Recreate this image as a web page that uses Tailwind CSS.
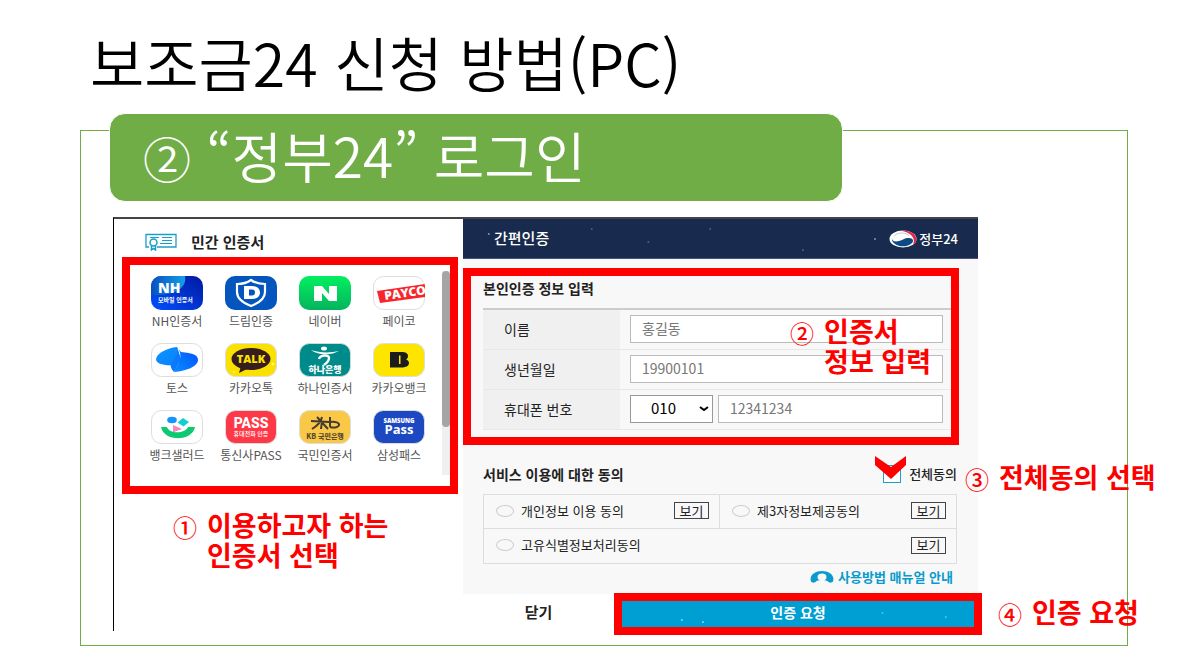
<!DOCTYPE html>
<html lang="ko">
<head>
    <meta charset="UTF-8">
    <meta name="viewport" content="width=device-width, initial-scale=1.0">
    <title>보조금24 신청 방법(PC)</title>
    <!-- Tailwind CSS CDN -->
    <script src="https://cdn.jsdelivr.net/npm/@tailwindcss/browser@4"></script>
</head>
<body class="bg-white font-['Noto_Sans_CJK_KR',sans-serif] text-[#222]">
    <main class="pt-5 pl-20 pr-[71px] pb-5">
        <h1 class="pl-2.5 text-[59px] leading-[84px] font-[350] text-black whitespace-nowrap">보조금24 신청 방법(PC)</h1>

        <section class="mt-[26px] border border-[#70ad47]">
            <h2 class="relative -mt-[18px] ml-7 w-[734px] max-w-full border border-white rounded-2xl bg-[#70ad47] pl-[33px] text-[55px] leading-[80px] pb-[7px] font-[350] text-white whitespace-nowrap"><span class="text-5xl leading-none">②</span> “정부24” 로그인</h2>

            <div class="flex mt-[15px] ml-8 mr-[149px] mb-3.5 border-t-2 border-l border-t-[#444] border-l-black">
                <!-- Certificate list -->
                <section class="w-[349px] shrink-0 pl-2 pr-[5px]">
                    <h3 class="flex items-center gap-3.5 h-[38px] pt-2 pl-[23px] text-[15px] font-bold">
                        <svg class="w-8 h-[18px]" viewBox="0 0 32 18" fill="none" stroke="#1a9fc9">
                            <path d="M4 14H1V1.500h30V14H12" stroke-width="1.300"/>
                            <path d="M5 4.500h9M17 4.500h10M17 7.500h10M15 10.500h12" stroke-width="1"/>
                            <circle cx="8.500" cy="9.500" r="3.500" stroke-width="1.500"/>
                            <path d="M6.500 12.500V17l2-1.500 2 1.500v-4.500" stroke-width="1.500"/>
                        </svg>
                        민간 인증서
                    </h3>
                    <div class="relative flex border-8 border-[#f00] h-[237px]">
                        <ul class="grid grid-cols-[repeat(4,74px)] auto-rows-[67px] pl-2.5 pt-2.5 flex-1 text-xs leading-4 text-center text-[#555] whitespace-nowrap">
                            <li class="flex flex-col items-center gap-0.5">
                                <svg class="w-[54px] h-9 shrink-0" viewBox="0 0 54 36">
                                    <defs>
                                        <linearGradient id="nh" x1="0" y1="1" x2="1" y2="0"><stop offset="0" stop-color="#0050ff"/><stop offset="1" stop-color="#0018a0"/></linearGradient>
                                        <linearGradient id="nh-arc" x1="0" y1="0" x2="1" y2="0"><stop offset="0" stop-color="#0a4fc0"/><stop offset="1" stop-color="#12a0e8"/></linearGradient>
                                    </defs>
                                    <rect x="1" y="1" width="52" height="34" rx="10" fill="url(#nh)"/>
                                    <path d="M1 20V11A10 10 0 0 1 11 1h24c2 11-8 20-34 19z" fill="url(#nh-arc)"/>
                                    <text x="8" y="18" font-size="14" font-weight="800" font-family="Open Sans, sans-serif" fill="#fff">NH</text>
                                    <text x="8" y="27" font-size="6" font-weight="700" fill="#fff">모바일 인증서</text>
                                </svg>
                                NH인증서
                            </li>
                            <li class="flex flex-col items-center gap-0.5">
                                <svg class="w-[54px] h-9 shrink-0" viewBox="0 0 54 36">
                                    <rect x="1" y="1" width="52" height="34" rx="10" fill="#0455bd"/>
                                    <path d="M27 5c4 3 9 4 14 4v8c0 7-6 11-14 14-8-3-14-7-14-14V9c5 0 10-1 14-4z" fill="none" stroke="#fff" stroke-width="2.200"/>
                                    <path fill-rule="evenodd" d="M20 11h8c5 0 8 2.500 8 6.500S33 24 28 24h-8zM25 14.500v6h3c2 0 3-1 3-3s-1-3-3-3z" fill="#fff"/>
                                </svg>
                                드림인증
                            </li>
                            <li class="flex flex-col items-center gap-0.5">
                                <svg class="w-[54px] h-9 shrink-0" viewBox="0 0 54 36">
                                    <defs><linearGradient id="naver" x1="0" y1="0" x2="0" y2="1"><stop offset="0" stop-color="#03ef60"/><stop offset="1" stop-color="#05b45d"/></linearGradient></defs>
                                    <rect x="1" y="1" width="52" height="34" rx="10" fill="url(#naver)"/>
                                    <path d="M16 11h8l7 8v-8h8v15h-8l-7-8v8h-8z" fill="#fff"/>
                                </svg>
                                네이버
                            </li>
                            <li class="flex flex-col items-center gap-0.5">
                                <svg class="w-[54px] h-9 shrink-0" viewBox="0 0 54 36">
                                    <defs><clipPath id="payco"><rect x="1" y="1" width="52" height="34" rx="10"/></clipPath></defs>
                                    <rect x="1.500" y="1.500" width="51" height="33" rx="10" fill="#fff" stroke="#ddd"/>
                                    <g clip-path="url(#payco)">
                                        <path d="M5 16l48-7v13L8 28z" fill="#f8252b"/>
                                        <text transform="rotate(-8 13 25)" x="13" y="25" font-size="12" font-weight="800" font-family="Open Sans, sans-serif" fill="#fff">PAYCO</text>
                                    </g>
                                </svg>
                                페이코
                            </li>
                            <li class="flex flex-col items-center gap-0.5">
                                <svg class="w-[54px] h-9 shrink-0" viewBox="0 0 54 36">
                                    <defs>
                                        <linearGradient id="toss" x1="0" y1="0" x2="1" y2="1"><stop offset="0" stop-color="#0a98ff"/><stop offset="1" stop-color="#0a7dff"/></linearGradient>
                                        <linearGradient id="toss-right" x1="0" y1="1" x2="1" y2="0"><stop offset="0" stop-color="#0a8cff"/><stop offset="1" stop-color="#0050ff"/></linearGradient>
                                    </defs>
                                    <rect x="1.500" y="1.500" width="51" height="33" rx="10" fill="#fff" stroke="#ddd"/>
                                    <path d="M27 5C17 6 7 11 6 17c0 5 8 7 19 6l6-4z" fill="url(#toss)"/>
                                    <path d="M27 5c3 3 4 8 3 12-1 5-4 8-6 13 13-1 24-6 24-12 0-5-5-7-17-8z" fill="url(#toss-right)"/>
                                    <path d="M27 5l4 12-7 13c-3-3-4-6-3-9 5-4 7-9 6-16z" fill="#0a78ff"/>
                                </svg>
                                토스
                            </li>
                            <li class="flex flex-col items-center gap-0.5">
                                <svg class="w-[54px] h-9 shrink-0" viewBox="0 0 54 36">
                                    <rect x="1.500" y="1.500" width="51" height="33" rx="10" fill="#fae100" stroke="#ddd"/>
                                    <ellipse cx="27" cy="17" rx="19.500" ry="11" fill="#371d1e"/>
                                    <path d="M17 24l-2 7 10-5z" fill="#371d1e"/>
                                    <text x="27" y="21" text-anchor="middle" font-size="11" font-weight="800" font-family="Open Sans, sans-serif" fill="#fae100">TALK</text>
                                    <circle cx="49" cy="22" r="1.500" fill="#fff38a"/>
                                    <circle cx="10" cy="30" r="1" fill="#fff38a"/>
                                </svg>
                                카카오톡
                            </li>
                            <li class="flex flex-col items-center gap-0.5">
                                <svg class="w-[54px] h-9 shrink-0" viewBox="0 0 54 36">
                                    <rect x="1.500" y="1.500" width="51" height="33" rx="10" fill="#008b8b" stroke="#cfdada"/>
                                    <ellipse cx="26" cy="6.500" rx="3" ry="2" fill="#fff"/>
                                    <path d="M13 8c8 3 20 3 28 1-7 4-20 5-28-1z" fill="#fff"/>
                                    <path d="M21 17c1-4 10-5 10-1 0 3-2 5-5 7" fill="none" stroke="#fff" stroke-width="2.400"/>
                                    <text x="27" y="31" text-anchor="middle" font-size="9" font-weight="900" fill="#fff">하나은행</text>
                                </svg>
                                하나인증서
                            </li>
                            <li class="flex flex-col items-center gap-0.5">
                                <svg class="w-[54px] h-9 shrink-0" viewBox="0 0 54 36">
                                    <rect x="1.500" y="1.500" width="51" height="33" rx="10" fill="#fee500" stroke="#ddd"/>
                                    <path fill-rule="evenodd" d="M18 10h11c5 0 7 1.500 7 4 0 2-1 3-2 3.500 2 .5 3 2 3 3.500 0 3-3 4.500-8 4.500H18zM27 13.500v8.500h1.500v-8.500z" fill="#1c1c1c"/>
                                </svg>
                                카카오뱅크
                            </li>
                            <li class="flex flex-col items-center gap-0.5">
                                <svg class="w-[54px] h-9 shrink-0" viewBox="0 0 54 36">
                                    <rect x="1.500" y="1.500" width="51" height="33" rx="10" fill="#fff" stroke="#ddd"/>
                                    <ellipse cx="22" cy="11" rx="4.800" ry="3.200" fill="#1593ff"/>
                                    <path d="M33 9l6 4-5.500 4.500-6-4z" fill="#14cfd2"/>
                                    <path d="M23 16l9 4-9 3.500z" fill="#f58ac0"/>
                                    <path d="M11 18h6c2 7 18 7 21 0h7c-3 15-31 15-34 0z" fill="#0dc971"/>
                                </svg>
                                뱅크샐러드
                            </li>
                            <li class="flex flex-col items-center gap-0.5">
                                <svg class="w-[54px] h-9 shrink-0" viewBox="0 0 54 36">
                                    <rect x="1.500" y="1.500" width="51" height="33" rx="10" fill="#ff3848" stroke="#ddd"/>
                                    <text x="27" y="19" text-anchor="middle" font-size="14" font-weight="800" font-family="Roboto, sans-serif" fill="#fff">PASS</text>
                                    <text x="27" y="27" text-anchor="middle" font-size="6" font-weight="500" fill="#fff">휴대전화 인증</text>
                                </svg>
                                통신사PASS
                            </li>
                            <li class="flex flex-col items-center gap-0.5">
                                <svg class="w-[54px] h-9 shrink-0" viewBox="0 0 54 36">
                                    <rect x="1.500" y="1.500" width="51" height="33" rx="10" fill="#f9c846" stroke="#ddd"/>
                                    <path d="M13 12l18 1M24 8c-1 5-5 9-10 12M19 8l11 12M32 8v10M32 13c5-1 10 1 9 3-1 3-6 3-9 2M24 12l-1 8" fill="none" stroke="#453a30" stroke-width="2"/>
                                    <text x="27" y="30" text-anchor="middle" font-size="7" font-weight="800" fill="#5a4a30">KB 국민은행</text>
                                </svg>
                                국민인증서
                            </li>
                            <li class="flex flex-col items-center gap-0.5">
                                <svg class="w-[54px] h-9 shrink-0" viewBox="0 0 54 36">
                                    <rect x="1.500" y="1.500" width="51" height="33" rx="10" fill="#1c49c2" stroke="#ddd"/>
                                    <text x="27" y="14" text-anchor="middle" font-size="6" font-weight="800" font-family="Open Sans, sans-serif" fill="#fff">SAMSUNG</text>
                                    <text x="27" y="25" text-anchor="middle" font-size="13" font-weight="700" font-family="Open Sans, sans-serif" fill="#fff">Pass</text>
                                </svg>
                                삼성패스
                            </li>
                        </ul>
                        <div class="absolute top-1.5 right-0 w-2 h-[204px] bg-[#f0f0f0]">
                            <div class="h-[156px] rounded-full bg-[#a5a5a5]"></div>
                        </div>
                    </div>
                    <p class="flex gap-2.5 pl-[51px] pt-4 text-[27px] leading-[30px] font-bold text-[#f00] whitespace-nowrap">
                        <span class="text-2xl leading-[34px] font-medium">①</span>
                        <span>이용하고자 하는<br>인증서 선택</span>
                    </p>
                </section>

                <!-- Simple authentication form -->
                <form class="flex-1 min-w-0 bg-[#f8f8f8]">
                    <header class="relative flex items-center justify-between h-10 pl-[31px] pr-5 bg-[#182a4d] border-b border-[#48557a] text-white">
                        <h3 class="text-[15px] font-medium">간편인증</h3>
                        <span class="flex items-center gap-0.5 text-[13px] font-medium">
                            <svg class="w-7 h-[18px]" viewBox="0 0 28 18">
                                <ellipse cx="14" cy="9" rx="13.500" ry="8.500" fill="#fff"/>
                                <path d="M12 .7C20-.3 27 4 27.500 9c0 3-2 5-4 6.500 3-5 2-12-11.500-14.800z" fill="#e0284c"/>
                                <path d="M3 8.500c0 3 4 3.500 7 2.500 4-1 6-3.500 10-3 4 0 5 3 3 5-4 4-12 4.500-17 1C4 12.500 2.500 10.500 3 8.500z" fill="#0d4a84"/>
                                <path d="M5 6.500c3-4.500 11-4.500 15-1" fill="none" stroke="#182a4d" stroke-opacity=".25"/>
                            </svg>
                            정부24
                        </span>
                        <svg class="absolute inset-0 w-full h-full" fill="#8794b5">
                            <circle cx="5%" cy="15" r="1"/>
                            <circle cx="25%" cy="10" r="1" fill-opacity=".5"/>
                            <circle cx="36%" cy="23" r="1" fill-opacity=".5"/>
                            <circle cx="48%" cy="10" r="1" fill-opacity=".5"/>
                            <circle cx="66%" cy="31" r="1" fill-opacity=".5"/>
                            <circle cx="80%" cy="20" r="1"/>
                        </svg>
                    </header>

                    <section class="relative mt-[9px] mr-[19px] h-[177px] border-8 border-[#f00] pl-3">
                        <h4 class="h-8 text-sm font-bold leading-6">본인인증 정보 입력</h4>
                        <table class="w-full border-t-2 border-[#ccc] text-sm">
                            <tr class="h-10 border-b border-[#e8e8e8]">
                                <th scope="row" class="w-[137px] pl-[21px] bg-[#f0f0f0] text-left font-normal"><label for="name">이름</label></th>
                                <td class="pl-2.5 pr-2"><input type="text" id="name" name="name" placeholder="홍길동" class="block w-full h-7 pb-0.5 pl-[11px] bg-white border border-[#bbb] placeholder:text-[#777]"></td>
                            </tr>
                            <tr class="h-10 border-b border-[#e8e8e8]">
                                <th scope="row" class="pl-[21px] bg-[#f0f0f0] text-left font-normal"><label for="birth">생년월일</label></th>
                                <td class="pl-2.5 pr-2"><input type="text" id="birth" name="birth" placeholder="19900101" class="block w-full h-7 pb-0.5 pl-[11px] bg-white border border-[#bbb] placeholder:text-[#777]"></td>
                            </tr>
                            <tr class="h-10 border-b border-[#e8e8e8]">
                                <th scope="row" class="pl-[21px] bg-[#f0f0f0] text-left font-normal"><label for="phone">휴대폰 번호</label></th>
                                <td class="pl-2.5 pr-2">
                                    <div class="flex gap-[5px]">
                                        <div class="relative w-[83px] shrink-0">
                                            <select name="carrier" aria-label="휴대폰 앞자리" class="appearance-none block w-full h-7 pb-0.5 pl-5 bg-white border border-[#999] text-[15px] text-black"><option>010</option></select>
                                            <svg class="absolute right-1 top-2.5 w-2.5 h-2 pointer-events-none" viewBox="0 0 10 8" fill="none" stroke="#000" stroke-width="2"><path d="M1 2l4 3 4-3"/></svg>
                                        </div>
                                        <input type="text" id="phone" name="phone" placeholder="12341234" class="block flex-1 min-w-0 h-7 pb-0.5 pl-[11px] bg-white border border-[#bbb] placeholder:text-[#777]">
                                    </div>
                                </td>
                            </tr>
                        </table>
                        <p class="absolute top-10 right-5 flex gap-2.5 text-[27px] leading-[30px] font-bold text-[#f00] whitespace-nowrap pointer-events-none">
                            <span class="text-2xl leading-[34px] font-medium">②</span>
                            <span>인증서<br>정보 입력</span>
                        </p>
                    </section>

                    <section class="ml-5 mr-[21px]">
                        <div class="relative flex items-center justify-between h-[49px] pt-2">
                            <h4 class="text-sm font-bold">서비스 이용에 대한 동의</h4>
                            <div class="relative flex items-center gap-2">
                                <input type="checkbox" id="agree-all" class="appearance-none w-[18px] h-[18px] bg-white border border-[#1a9fc9]">
                                <svg class="absolute -left-2 -top-2 w-8 h-6 pointer-events-none" viewBox="0 0 32 24"><path d="M0 0l16 11L31 0v9L16 23 0 9z" fill="#f00"/></svg>
                                <label for="agree-all" class="text-[13px] font-medium">전체동의</label>
                            </div>
                            <p class="absolute top-[17px] left-full ml-2 flex gap-2.5 text-[27px] leading-[30px] font-bold text-[#f00] whitespace-nowrap">
                                <span class="text-2xl leading-[34px] font-medium">③</span>
                                <span>전체동의 선택</span>
                            </p>
                        </div>
                        <div class="grid grid-cols-2 border border-[#ddd] text-[13px]">
                            <div class="flex items-center gap-[7px] h-[34px] pb-0.5 pl-3 pr-2.5 border-r border-b border-[#ddd]">
                                <input type="radio" id="agree-personal" class="appearance-none w-[18px] h-3 rounded-[50%] border border-[#ccc]">
                                <label for="agree-personal">개인정보 이용 동의</label>
                                <button type="button" class="ml-auto w-[35px] h-[17px] border border-[#444] leading-[14px]">보기</button>
                            </div>
                            <div class="flex items-center gap-[7px] h-[34px] pb-0.5 pl-3 pr-2.5 border-b border-[#ddd]">
                                <input type="radio" id="agree-third" class="appearance-none w-[18px] h-3 rounded-[50%] border border-[#ccc]">
                                <label for="agree-third">제3자정보제공동의</label>
                                <button type="button" class="ml-auto w-[35px] h-[17px] border border-[#444] leading-[14px]">보기</button>
                            </div>
                            <div class="col-span-2 flex items-center gap-[7px] h-[34px] pb-0.5 pl-3 pr-2.5">
                                <input type="radio" id="agree-unique" class="appearance-none w-[18px] h-3 rounded-[50%] border border-[#ccc]">
                                <label for="agree-unique">고유식별정보처리동의</label>
                                <button type="button" class="ml-auto w-[35px] h-[17px] border border-[#444] leading-[14px]">보기</button>
                            </div>
                        </div>
                        <div class="flex justify-end h-[30px] pr-1 pb-1">
                            <a href="#" class="flex items-center gap-1 text-[13px] font-bold text-[#0a9bcc]">
                                <svg class="w-6 h-3.5" viewBox="0 0 24 14">
                                    <path d="M1 11.500C-1 5 5 1 12 1s13 4 11 10.500c-1 1.500-4 1.500-5 0-2-2-10-2-12 0-1 1.500-4 1.500-5 0z" fill="#0a9bcc"/>
                                    <ellipse cx="12" cy="7" rx="4.500" ry="3.500" fill="#f8f8f8"/>
                                </svg>
                                사용방법 매뉴얼 안내
                            </a>
                        </div>
                    </section>

                    <footer class="flex h-[37px] bg-white">
                        <button type="button" class="w-[151px] shrink-0 text-[15px] font-bold">닫기</button>
                        <div class="relative flex-1 h-[42px] -mt-px -mr-1 border-8 border-[#f00]">
                            <button type="submit" class="block w-full h-full pb-1 bg-[#009fd3] text-sm font-bold text-white">인증 요청</button>
                            <svg class="absolute inset-0 w-full h-full pointer-events-none" fill="#7de0f5">
                                <circle cx="17%" cy="19" r="1"/>
                                <circle cx="23%" cy="21" r="1"/>
                                <circle cx="74%" cy="12" r="1" fill-opacity=".6"/>
                                <circle cx="92%" cy="16" r="1" fill-opacity=".6"/>
                            </svg>
                            <p class="absolute -top-1 left-full ml-6 flex gap-2.5 text-[27px] leading-[30px] font-bold text-[#f00] whitespace-nowrap">
                                <span class="text-2xl leading-[34px] font-medium">④</span>
                                <span>인증 요청</span>
                            </p>
                        </div>
                    </footer>
                </form>
            </div>
        </section>
    </main>
</body>
</html>
